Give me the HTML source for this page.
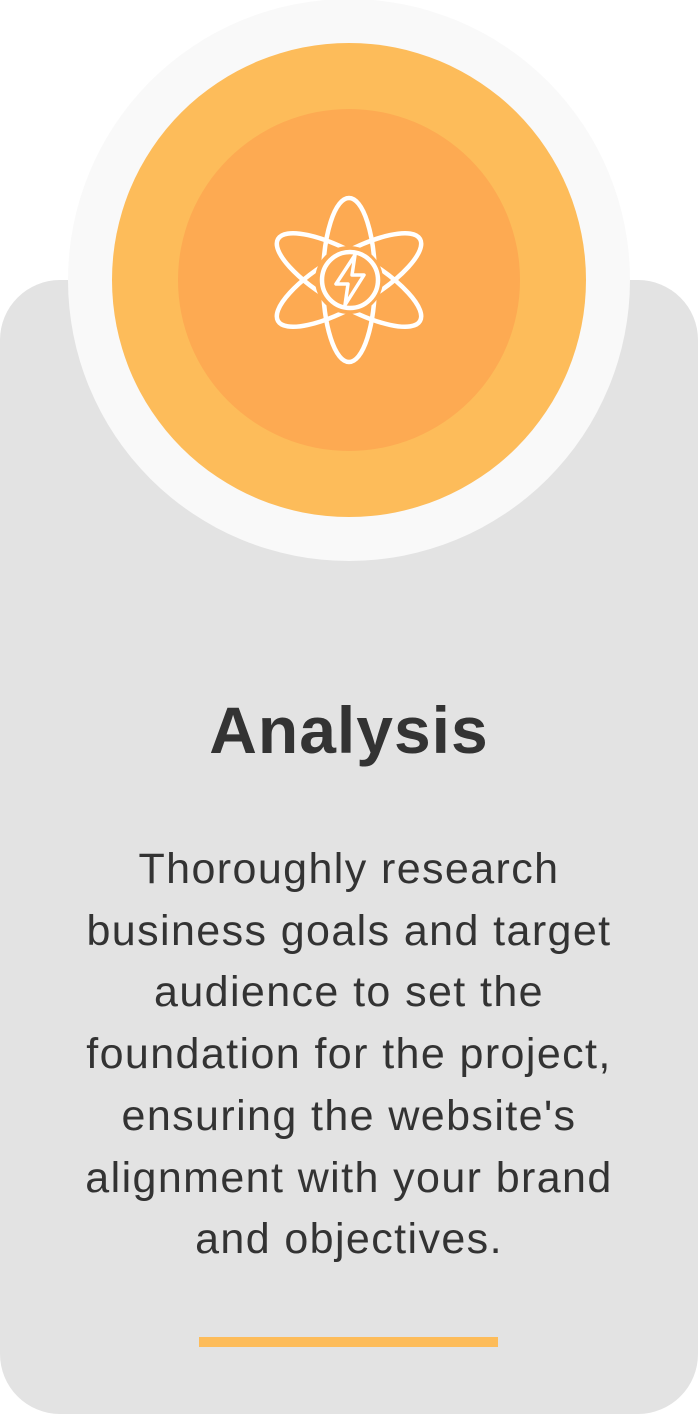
<!DOCTYPE html>
<html><head><style>
html,body{margin:0;padding:0;background:#fff;}
body{width:698px;height:1414px;position:relative;overflow:hidden;font-family:"Liberation Sans",sans-serif;}
.card{position:absolute;left:0;top:280px;width:698px;height:1134px;background:#e3e3e3;border-radius:60px;}
.c{position:absolute;border-radius:50%;}
h1{position:absolute;left:0;width:698px;top:688px;margin:0;text-align:center;font-size:66px;font-weight:bold;color:#333;line-height:84px;letter-spacing:1px;}
p{position:absolute;left:0;width:698px;top:839px;margin:0;text-align:center;font-size:43px;line-height:61.7px;color:#333;letter-spacing:1.4px;}
.bar{position:absolute;left:199px;top:1337px;width:299px;height:10px;background:#fdbc5a;}
</style></head><body>
<div class="card"></div>
<div class="c" style="left:68px;top:-1px;width:562px;height:562px;background:#f9f9f9"></div>
<div class="c" style="left:112px;top:43px;width:474px;height:474px;background:#fdbc5a"></div>
<div class="c" style="left:178px;top:109px;width:342px;height:342px;background:#fdaa52"></div>
<svg style="position:absolute;left:249px;top:180px" width="200" height="200" viewBox="249 180 200 200">
<g fill="none" stroke="#fff" stroke-width="4.5" stroke-linejoin="round">
<ellipse cx="349" cy="280" rx="26" ry="82"/>
<ellipse cx="349" cy="280" rx="26" ry="82" transform="rotate(60 349 280)"/>
<ellipse cx="349" cy="280" rx="26" ry="82" transform="rotate(-60 349 280)"/>
<circle cx="349" cy="280" r="34" fill="#fdaa52" stroke="none"/>
<circle cx="350" cy="280" r="28"/>
<path d="M355 255 L336 284 L348 284 L345 305 L364 275 L352 275 Z" stroke-width="3.5"/>
</g></svg>
<h1>Analysis</h1>
<p>Thoroughly research<br>business goals and target<br>audience to set the<br>foundation for the project,<br>ensuring the website's<br>alignment with your brand<br>and objectives.</p>
<div class="bar"></div>
</body></html>
